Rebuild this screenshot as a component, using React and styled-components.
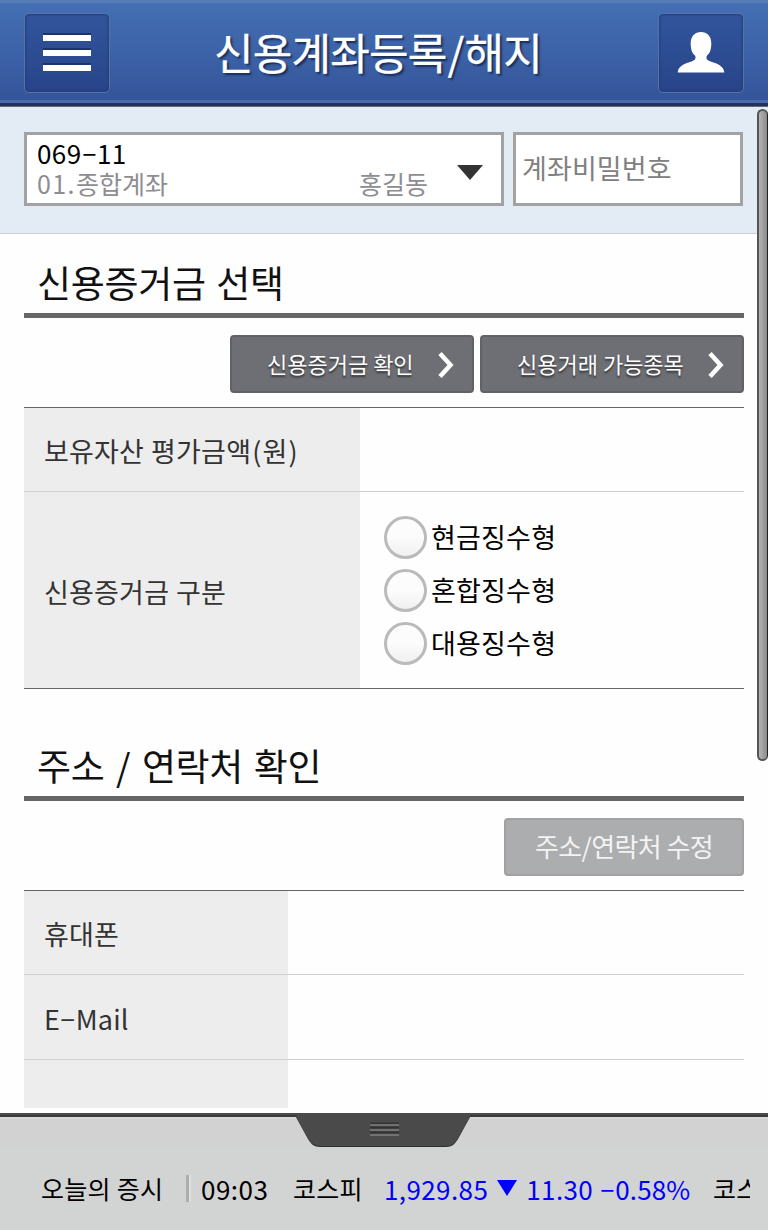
import styled, { createGlobalStyle, css } from "styled-components";

const Global = createGlobalStyle`
* { box-sizing: border-box; }
body {
    margin: 0;
    background: #fff;
    font-family: "Noto Sans CJK KR", "Noto Sans", sans-serif;
}
button { font-family: inherit; }
`;

const MenuIcon = () => (
  <svg width="50" height="42" viewBox="0 0 50 42">
    <path d="M1 2h48M1 17h48M1 32h48" stroke="#1d3468" strokeWidth="2" />
    <path d="M1 6h48M1 21h48M1 36h48" stroke="#fff" strokeWidth="6" />
  </svg>
);

const UserIcon = () => (
  <svg width="50" height="42" viewBox="0 0 50 42">
    <path
      fill="#fff"
      d="M25 0C31 0 35.5 4 35.3 12C35.1 18.500 33.500 21.500 31 23.500C29.600 26.500 31 28.200 34 29.200C41 31.500 48 34 48.300 40.500H1.700C2 34 9 31.500 16 29.200C19 28.200 20.400 26.500 19 23.500C16.500 21.500 14.900 18.500 14.700 12C14.500 4 19 0 25 0Z"
    />
  </svg>
);

const Chevron = () => (
  <svg width="18" height="28" viewBox="0 0 18 28">
    <path d="M3 2.500L13.500 14L3 25.500" fill="none" stroke="#fff" strokeWidth="4.500" />
  </svg>
);

const PullTab = () => (
  <svg width="176" height="34" viewBox="0 0 176 34">
    <path d="M0 0H174V4L162 26C159 31 156 34 150 34H24C18 34 15 31 12 26L0 4Z" fill="#2d2d2d" />
    <path d="M0 0H174V4L161.500 26C158.500 30 156 33 150 33H24C18 33 15.500 30 12.500 26L0 4Z" fill="#4a4a4a" />
    <path d="M74 10.500H103M74 14.500H103M74 19.500H103" stroke="#333" strokeWidth="2" />
    <path d="M74 12H103M74 17H103M74 22H103" stroke="#808080" strokeWidth="1.400" />
  </svg>
);

const assetTypes = ["현금징수형", "혼합징수형", "대용징수형"];

const App = () => {
  return (
    <Page>
      <Global />
      <Header>
        <HeaderButton aria-label="메뉴"><MenuIcon /></HeaderButton>
        <Title>신용계좌등록<Slash>/</Slash>해지</Title>
        <HeaderButton aria-label="내 정보"><UserIcon /></HeaderButton>
      </Header>

      <Content>
        <AccountBar>
          <AccountSelect>
            <AccountInfo>
              <AccountNo>069<Dash>-</Dash>11</AccountNo>
              <AccountName>
                <span><Digits>01.</Digits>종합계좌</span>
                <span>홍길동</span>
              </AccountName>
            </AccountInfo>
            <Arrow width="26" height="15" viewBox="0 0 26 15"><path d="M0 0H26L13 15Z" fill="#333" /></Arrow>
          </AccountSelect>
          <Password placeholder="계좌비밀번호" />
        </AccountBar>

        <Section>
          <SectionTitle>신용증거금 선택</SectionTitle>
          <Actions>
            <ActionButton $width={244}>신용증거금 확인<Chevron /></ActionButton>
            <ActionButton $width={264}>신용거래 가능종목<Chevron /></ActionButton>
          </Actions>
          <Table $closed>
            <Row $height={83}>
              <Label $width={336}><span>보유자산 평가금액<Paren>(</Paren>원<Paren>)</Paren></span></Label>
            </Row>
            <Row $height={197}>
              <Label $width={336}>신용증거금 구분</Label>
              <RadioList>
                {assetTypes.map((type) => (
                  <Radio key={type}><Circle /><RadioText>{type}</RadioText></Radio>
                ))}
              </RadioList>
            </Row>
          </Table>
        </Section>

        <Section>
          <SectionTitle>주소 <Slash>/</Slash> 연락처 확인</SectionTitle>
          <Actions>
            <ActionButton $width={240} disabled>주소/연락처 수정</ActionButton>
          </Actions>
          <Table>
            <Row $height={83}><Label $width={264}>휴대폰</Label></Row>
            <Row $height={85}><Label $width={264}><span>E<Dash>-</Dash>Mail</span></Label></Row>
            <Row $height={49}><Label $width={264} /></Row>
          </Table>
        </Section>
        <ScrollThumb />
      </Content>

      <Footer>
        <PullTab />
        <Ticker>
          <TickerTitle>오늘의 증시</TickerTitle>
          <Divider />
          <Time>09:03</Time>
          <Index>코스피</Index>
          <Quote>
            <span>1,929.85</span>
            <svg width="20" height="16" viewBox="0 0 20 16"><path d="M0 0H20L10 16Z" fill="#00f" /></svg>
            <span>11.30</span>
            <Rate><Dash>-</Dash>0.58%</Rate>
          </Quote>
          <Index>코스닥</Index>
        </Ticker>
      </Footer>
    </Page>
  );
};

const Page = styled.div`
    width: 768px;
    height: 1230px;
    display: flex;
    flex-direction: column;
    overflow: hidden;
    background: #fefefe;
`;

const Header = styled.header`
    height: 107px;
    flex: none;
    display: flex;
    justify-content: space-between;
    align-items: flex-start;
    padding: 10px 24px 0;
    border-top: 3px solid #577db9;
    border-bottom: 1px solid #686868;
    background: linear-gradient(#4470b4, #35549a 97px, #4d6bac 97px, #4d6bac 100px, #1e3160 100px);
`;

const HeaderButton = styled.button`
    width: 86px;
    height: 80px;
    display: flex;
    justify-content: center;
    align-items: center;
    padding: 0;
    border: 1px solid #5472b0;
    border-radius: 5px;
    background: linear-gradient(#31559b, #28448a);
    box-shadow: inset 0 0 2px 1px #263f77;
`;

const Title = styled.h1`
    margin: 8px 12px 0 0;
    color: #fff;
    font-size: 43px;
    font-weight: 400;
    line-height: 60px;
    letter-spacing: -0.8px;
    -webkit-text-stroke: 0.3px #fff;
    text-shadow: 2px 2px 2px #182c55;
    white-space: nowrap;
`;

const Slash = styled.span`
    margin: 0 1px;
`;

const Content = styled.main`
    position: relative;
    flex: 1;
    min-height: 0;
    overflow: hidden;
`;

const AccountBar = styled.div`
    height: 127px;
    display: flex;
    gap: 9px;
    padding: 25px 25px 0 24px;
    border-bottom: 1px solid #ccd1d8;
    background: #e3ebf5;
`;

const field = css`
    height: 74px;
    border: 3px solid #a2a2a2;
    border-radius: 0;
    background: #fff;
`;

const AccountSelect = styled.div`
    ${field}
    width: 480px;
    display: flex;
    align-items: center;
    justify-content: space-between;
    padding: 3px 18px 0 10px;
`;

const AccountInfo = styled.div`
    width: 391px;
    line-height: 30px;
    margin-top: -5px;
`;

const AccountNo = styled.div`
    color: #000;
    font-size: 26px;
    letter-spacing: 0.4px;
`;

const AccountName = styled.div`
    display: flex;
    justify-content: space-between;
    color: #8d8d92;
    font-size: 25px;
`;

const Arrow = styled.svg`
    margin-top: 4px;
`;

const Digits = styled.span`
    letter-spacing: 1.4px;
`;

const Dash = styled.span`
    display: inline-block;
    margin: 0 3px;
    transform: translateY(-2px) scaleX(1.8);
`;

const Paren = styled.span`
    margin: 0 1px;
`;

const Password = styled.input`
    ${field}
    width: 230px;
    padding: 0 6px 4px;
    font: 27px "Noto Sans CJK KR", sans-serif;
    letter-spacing: 0.1px;
    &::placeholder {
        color: #808080;
    }
`;

const Section = styled.section`
    width: 720px;
    margin-left: 24px;
`;

const SectionTitle = styled.h2`
    height: 84px;
    margin: 0;
    padding: 21px 0 0 13px;
    border-bottom: 5px solid #666;
    color: #111;
    font-size: 37px;
    font-weight: 400;
    line-height: 54px;
    letter-spacing: -0.3px;
    word-spacing: 2.6px;
    white-space: pre;
`;

const Actions = styled.div`
    display: flex;
    justify-content: flex-end;
    gap: 6px;
    padding: 17px 0 14px;
`;

const ActionButton = styled.button`
    width: ${({ $width }) => $width}px;
    height: 58px;
    display: flex;
    align-items: center;
    justify-content: space-between;
    padding: 0 17px 3px 35px;
    border: 2px solid #626266;
    border-radius: 4px;
    background: #6e6f75;
    color: #fff;
    font-size: 22px;
    white-space: nowrap;
    text-shadow: 0 2px 2px #333;

    svg {
        margin-top: 5px;
    }

    &:disabled {
        justify-content: center;
        padding: 0 0 4px;
        border-color: #a2a2a4;
        background: #acadaf;
        color: #f3f3f3;
        font-size: 26px;
        letter-spacing: -0.6px;
        text-shadow: none;
    }
`;

const Table = styled.div`
    border-top: 1px solid #666;
    ${({ $closed }) => $closed && "border-bottom: 1px solid #666; margin-bottom: 28px;"}
`;

const Row = styled.div`
    height: ${({ $height }) => $height}px;
    display: flex;
    & + & {
        border-top: 1px solid #d0d0d0;
    }
`;

const Label = styled.div`
    width: ${({ $width }) => $width}px;
    display: flex;
    align-items: center;
    padding: 2px 0 0 20px;
    background: #ededed;
    color: #333;
    font-size: 27px;
    letter-spacing: 0.2px;
    word-spacing: 0.6px;
    white-space: nowrap;
`;

const RadioList = styled.div`
    display: flex;
    flex-direction: column;
    gap: 10px;
    padding: 24px 0 0 24px;
`;

const Radio = styled.label`
    height: 43px;
    display: flex;
    align-items: center;
    gap: 4px;
    color: #000;
    font-size: 27px;
    letter-spacing: 0.2px;
`;

const RadioText = styled.span`
    padding-bottom: 3px;
`;

const Circle = styled.span`
    width: 43px;
    height: 43px;
    border: 3px solid #bababa;
    border-radius: 50%;
    background: linear-gradient(#fcfcfc 50%, #f0f0f0);
`;

const ScrollThumb = styled.div`
    position: absolute;
    top: 2px;
    right: 0;
    width: 11px;
    height: 652px;
    border: 2px solid #555;
    border-right: 1px solid #222;
    border-radius: 6px;
    background: linear-gradient(90deg, #b5b5b5, #8c8c8c);
`;

const Footer = styled.footer`
    height: 117px;
    flex: none;
    display: flex;
    flex-direction: column;
    align-items: center;
    background: linear-gradient(#4a4a4a 2px, #3b3b3b 2px, #3b3b3b 4px, #dcdcdc 4px, #d2d2d2 6px, #d2d2d2 34px, #d2d4d3 34px);
`;

const Ticker = styled.div`
    width: 709px;
    height: 83px;
    display: flex;
    align-items: center;
    align-self: flex-end;
    margin-right: 18px;
    padding-bottom: 1px;
    overflow: hidden;
    color: #000;
    font-size: 25px;
    white-space: nowrap;
`;

const TickerTitle = styled.span`
    width: 145px;
    flex: none;
    letter-spacing: 0.3px;
`;

const Divider = styled.span`
    width: 5px;
    height: 27px;
    flex: none;
    border-left: 3px solid #adadad;
    border-right: 2px solid #e0e0e0;
`;

const Time = styled.span`
    width: 102px;
    flex: none;
    padding-left: 10px;
    font-size: 26px;
    letter-spacing: 0.5px;
`;

const Index = styled.span`
    width: 91px;
    flex: none;
    letter-spacing: 0.2px;
`;

const Quote = styled.span`
    width: 329px;
    flex: none;
    display: flex;
    align-items: center;
    gap: 9px;
    color: #00f;
    font-size: 26px;
    letter-spacing: 0.4px;
`;

const Rate = styled.span`
    margin-left: -2px;
    letter-spacing: 0.1px;
`;

export default App;
